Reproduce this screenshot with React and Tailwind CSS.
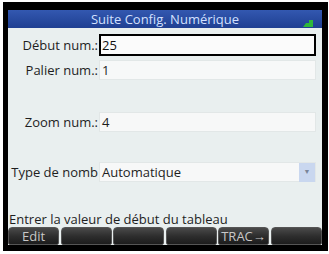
import React from "react";

const font = { fontFamily: '"Open Sans", "Noto Sans", sans-serif' };

function Field({ label, value, active, arrow }) {
  return (
    <div className="flex items-center h-[22px]">
      <div className="w-[91px] shrink-0 pr-[1px] text-right whitespace-nowrap text-[13px] text-[#1e1e1e] leading-[18px]">
        {label}
      </div>
      <div
        className={
          active
            ? "w-[217px] h-[22px] border-2 border-black bg-[#fbfbfb] flex items-center pl-[1px] text-[13px] text-[#111] leading-[18px]"
            : "w-[217px] h-[20px] border border-[#e2e7e7] bg-[#f7f8f8] flex items-center pl-[2px] text-[13px] text-[#1e1e1e] leading-[18px]"
        }
      >
        <span className="flex-1">{value}</span>
        {arrow && (
          <span className="w-[16px] h-[19px] bg-[#c9d7ef] flex items-center justify-center text-[7px] text-[#7a8598]">
            ▼
          </span>
        )}
      </div>
    </div>
  );
}

function MenuButton({ children }) {
  return (
    <div className="w-[51px] h-[18px] rounded-t-[4px] rounded-b-[2px] border border-[#555] bg-gradient-to-b from-[#4a4a4a] via-[#2e2e2e] to-[#1c1c1c] flex items-center justify-center text-[13px] text-[#c8c8c8] leading-[16px]">
      {children}
    </div>
  );
}

export default function App() {
  return (
    <div className="w-[329px] h-[254px] bg-white pt-[2px] pl-[3px] pr-[1px] pb-[3px]" style={font}>
      <div className="w-full h-full bg-black pt-[8px] pl-[5px] pr-[6px] pb-[6px]">
        <div className="w-full h-full bg-[#e9efef] flex flex-col">
          <div className="relative h-[18px] bg-gradient-to-b from-[#3358b0] to-[#1f3f92] flex items-center justify-center text-[13px] text-[#d2e0ff] leading-[16px]">
            Suite Config. Numérique
            <svg className="absolute right-[9px] bottom-[1px]" width="10" height="7" viewBox="0 0 10 7">
              <path d="M0 7 L3 3 L6 3 L6 0 L10 0 L10 7 Z" fill="#2fb83a" />
            </svg>
          </div>
          <div className="flex flex-col pt-[6px]">
            <Field label="Début num.:" value="25" active />
            <div className="mt-[3px]">
              <Field label="Palier num.:" value="1" />
            </div>
            <div className="mt-[30px]">
              <Field label="Zoom num.:" value="4" />
            </div>
            <div className="mt-[28px]">
              <Field label="Type de nomb" value="Automatique" arrow />
            </div>
          </div>
          <div className="mt-auto pl-[1px] text-[13px] text-[#1e1e1e] leading-[16px]">
            Entrer la valeur de début du tableau
          </div>
          <div className="flex gap-[1.5px] h-[18px]">
            <MenuButton>Edit</MenuButton>
            <MenuButton />
            <MenuButton />
            <MenuButton />
            <MenuButton>TRAC→</MenuButton>
            <MenuButton />
          </div>
        </div>
      </div>
    </div>
  );
}
